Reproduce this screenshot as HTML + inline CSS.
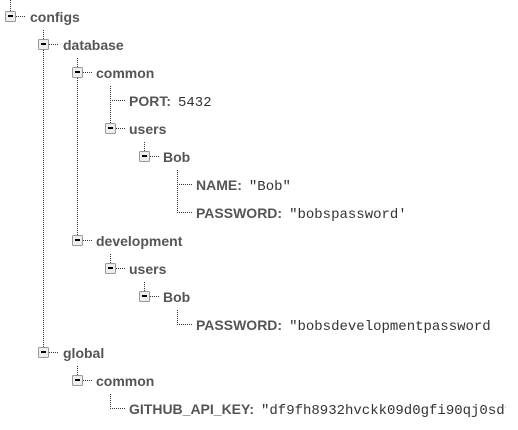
<!DOCTYPE html>
<html><head><meta charset="utf-8"><style>
html,body{margin:0;padding:0;background:#fff;width:518px;height:430px;overflow:hidden;position:relative}
.t{position:absolute;height:28px;line-height:28px;white-space:nowrap;font-family:"Liberation Sans",Arial,sans-serif;font-weight:bold;font-size:14px;color:#555}
.v{font-family:"Liberation Mono",monospace;font-weight:normal;font-size:14px;color:#333;margin-left:7px}
.clip{position:absolute;left:0;top:0;width:506px;height:430px;overflow:hidden}
svg{position:absolute;left:0;top:0}
</style></head><body>
<svg width="518" height="430">
<g stroke="#333" stroke-width="1" stroke-dasharray="1,1" fill="none">
<line x1="10.5" y1="0" x2="10.5" y2="11"/>
<line x1="43.5" y1="30" x2="43.5" y2="352"/>
<line x1="77.5" y1="58" x2="77.5" y2="240"/>
<line x1="110.5" y1="86" x2="110.5" y2="128"/>
<line x1="144.5" y1="142" x2="144.5" y2="156"/>
<line x1="177.5" y1="170" x2="177.5" y2="212"/>
<line x1="110.5" y1="254" x2="110.5" y2="268"/>
<line x1="144.5" y1="282" x2="144.5" y2="296"/>
<line x1="177.5" y1="310" x2="177.5" y2="324"/>
<line x1="77.5" y1="366" x2="77.5" y2="380"/>
<line x1="110.5" y1="394" x2="110.5" y2="408"/>
<line x1="110" y1="100.5" x2="126" y2="100.5"/>
<line x1="177" y1="184.5" x2="193" y2="184.5"/>
<line x1="177" y1="212.5" x2="193" y2="212.5"/>
<line x1="177" y1="324.5" x2="193" y2="324.5"/>
<line x1="110" y1="408.5" x2="126" y2="408.5"/>
<line x1="16" y1="16.5" x2="25" y2="16.5"/>
<line x1="49" y1="44.5" x2="58" y2="44.5"/>
<line x1="83" y1="72.5" x2="92" y2="72.5"/>
<line x1="116" y1="128.5" x2="125" y2="128.5"/>
<line x1="150" y1="156.5" x2="159" y2="156.5"/>
<line x1="83" y1="240.5" x2="92" y2="240.5"/>
<line x1="116" y1="268.5" x2="125" y2="268.5"/>
<line x1="150" y1="296.5" x2="159" y2="296.5"/>
<line x1="49" y1="352.5" x2="58" y2="352.5"/>
<line x1="83" y1="380.5" x2="92" y2="380.5"/>
</g>
<g fill="#eee" stroke="#999">
<rect x="5.5" y="11.5" width="10" height="10" rx="1"/>
<rect x="38.5" y="39.5" width="10" height="10" rx="1"/>
<rect x="72.5" y="67.5" width="10" height="10" rx="1"/>
<rect x="105.5" y="123.5" width="10" height="10" rx="1"/>
<rect x="139.5" y="151.5" width="10" height="10" rx="1"/>
<rect x="72.5" y="235.5" width="10" height="10" rx="1"/>
<rect x="105.5" y="263.5" width="10" height="10" rx="1"/>
<rect x="139.5" y="291.5" width="10" height="10" rx="1"/>
<rect x="38.5" y="347.5" width="10" height="10" rx="1"/>
<rect x="72.5" y="375.5" width="10" height="10" rx="1"/>
</g>
<g fill="#000">
<rect x="8" y="15" width="5" height="2"/>
<rect x="41" y="43" width="5" height="2"/>
<rect x="75" y="71" width="5" height="2"/>
<rect x="108" y="127" width="5" height="2"/>
<rect x="142" y="155" width="5" height="2"/>
<rect x="75" y="239" width="5" height="2"/>
<rect x="108" y="267" width="5" height="2"/>
<rect x="142" y="295" width="5" height="2"/>
<rect x="41" y="351" width="5" height="2"/>
<rect x="75" y="379" width="5" height="2"/>
</g>
</svg>
<div class="clip">
<div class="t" style="left:30px;top:3px">configs</div>
<div class="t" style="left:63px;top:31px">database</div>
<div class="t" style="left:96px;top:59px">common</div>
<div class="t" style="left:129px;top:87px">PORT:<span class="v">5432</span></div>
<div class="t" style="left:129px;top:115px">users</div>
<div class="t" style="left:163px;top:143px">Bob</div>
<div class="t" style="left:196px;top:171px">NAME:<span class="v">"Bob"</span></div>
<div class="t" style="left:196px;top:199px">PASSWORD:<span class="v">"bobspassword'</span></div>
<div class="t" style="left:96px;top:227px">development</div>
<div class="t" style="left:129px;top:255px">users</div>
<div class="t" style="left:163px;top:283px">Bob</div>
<div class="t" style="left:196px;top:311px">PASSWORD:<span class="v">"bobsdevelopmentpassword</span></div>
<div class="t" style="left:63px;top:339px">global</div>
<div class="t" style="left:96px;top:367px">common</div>
<div class="t" style="left:129px;top:395px">GITHUB_API_KEY:<span class="v">"df9fh8932hvckk09d0gfi90qj0sdf</span></div>
</div>
</body></html>
